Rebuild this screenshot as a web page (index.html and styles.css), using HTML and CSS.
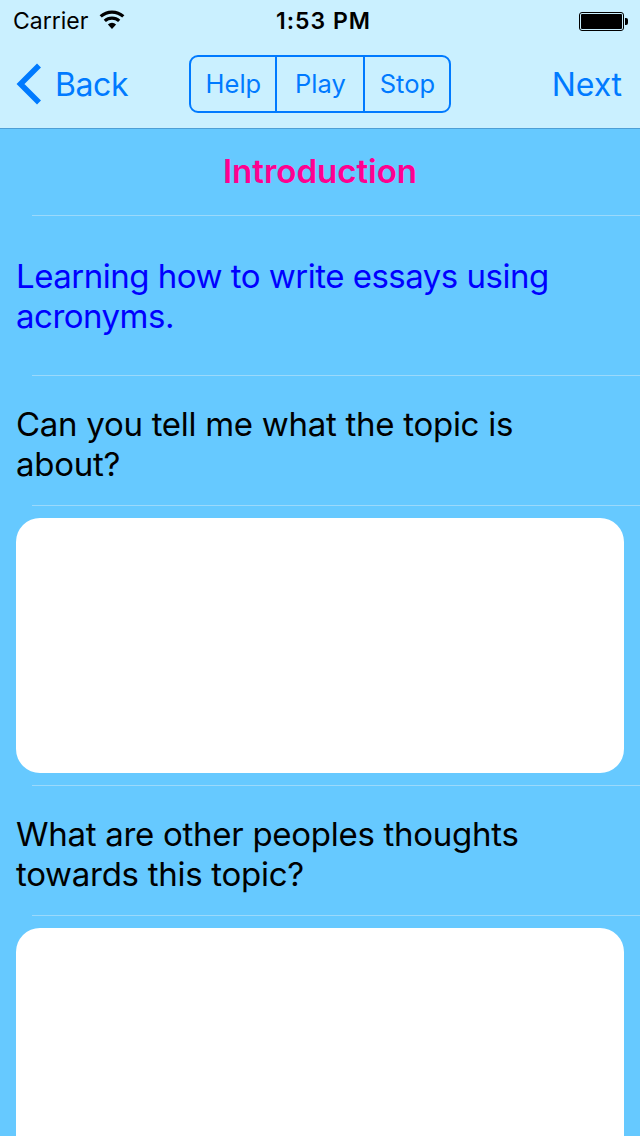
FILE: index.html
```html
<!DOCTYPE html>
<html lang="en">
<head>
<meta charset="utf-8">
<title>Introduction</title>
<link rel="stylesheet" href="styles.css">
</head>
<body>
<div class="screen">
  <header class="bar">
    <div class="status">
      <div class="status-left">
        <span>Carrier</span>
        <svg class="wifi" viewBox="0 0 26 20" width="26" height="20"><path d="M13 19 L8.9 14.4 A6 6 0 0 1 17.1 14.4 Z"/><path d="M6.9 12.1 L4.7 9.7 A12.4 12.4 0 0 1 21.3 9.7 L19.1 12.1 A9.2 9.2 0 0 0 6.9 12.1 Z"/><path d="M2.8 7.6 L0.6 5.2 A18.6 18.6 0 0 1 25.4 5.2 L23.2 7.6 A15.4 15.4 0 0 0 2.8 7.6 Z"/></svg>
      </div>
      <div class="status-time">1:53 PM</div>
      <div class="status-right">
        <div class="battery"><div class="battery-fill"></div></div>
        <div class="battery-tip"></div>
      </div>
    </div>
    <nav class="nav">
      <a class="back">
        <svg class="chevron" viewBox="0 0 26 42" width="26" height="42"><path d="M23 2.5 L4.5 21 L23 39.5" fill="none" stroke="#007aff" stroke-width="5.6"/></svg>
        <span>Back</span>
      </a>
      <div class="segments">
        <span class="seg seg-help">Help</span>
        <span class="seg seg-play">Play</span>
        <span class="seg seg-stop">Stop</span>
      </div>
      <a class="next">Next</a>
    </nav>
  </header>
  <main class="list">
    <section class="row row-title"><h1>Introduction</h1></section>
    <section class="row row-intro"><p>Learning how to write essays using acronyms.</p></section>
    <section class="row row-question"><p>Can you tell me what the topic is about?</p></section>
    <section class="row row-box"><div class="box"></div></section>
    <section class="row row-question"><p>What are other peoples thoughts towards this topic?</p></section>
    <section class="row row-box row-last"><div class="box"></div></section>
  </main>
</div>
</body>
</html>
```
FILE: styles.css
```css
* { box-sizing: border-box; }
html, body { margin: 0; padding: 0; }
body { font-family: Inter, "Liberation Sans", sans-serif; background: #66c9ff; }
.screen { width: 640px; height: 1136px; overflow: hidden; display: flex; flex-direction: column; background: #66c9ff; }
.bar { height: 129px; flex: none; background: #caf0ff; border-bottom: 1px solid #4d9fd6; }
.status { height: 40px; display: flex; align-items: center; justify-content: space-between; padding: 2px 12px 0 13px; font-size: 23px; color: #000; position: relative; }
.status-left { display: flex; align-items: center; gap: 11px; width: 200px; }
.wifi { fill: #000; margin-top: -3px; }
.status-time { font-weight: 600; font-size: 23px; letter-spacing: 1px; margin-left: 6px; }
.status-right { display: flex; align-items: center; justify-content: flex-end; width: 200px; }
.battery { width: 45px; height: 19px; border: 1px solid #000; border-radius: 3px; padding: 1px; }
.battery-fill { height: 100%; background: #000; border-radius: 1px; }
.battery-tip { width: 3px; height: 7px; background: #000; border-radius: 0 2px 2px 0; margin-left: 1px; }
.nav { height: 88px; display: flex; align-items: center; justify-content: space-between; padding: 0 18px 0 16px; color: #007aff; font-size: 32px; letter-spacing: -0.1px; }
.back { display: flex; align-items: center; gap: 13px; width: 172px; letter-spacing: -0.4px; }
.chevron { flex: none; }
.next { display: block; }
.segments { display: flex; height: 58px; width: 262px; flex: none; border: 2px solid #007aff; border-radius: 9px; font-size: 25.5px; letter-spacing: 0; margin-right: 99px; margin-top: -1px; }
.seg { display: flex; align-items: center; justify-content: center; }
.seg-help { width: 86px; border-right: 2px solid #007aff; }
.seg-play { width: 88px; border-right: 2px solid #007aff; }
.seg-stop { flex: 1; }
.list { flex: 1; display: flex; flex-direction: column; }
.row { position: relative; flex: none; }
.row::after { content: ""; position: absolute; left: 32px; right: 0; bottom: 0; height: 1px; background: #9bd9fb; }
.row-last::after { display: none; }
.row-title { height: 87px; padding-bottom: 4px; display: flex; align-items: center; justify-content: center; }
.row-title h1 { margin: 0; font-size: 33px; font-weight: 600; color: #ff0090; }
.row p { margin: 0; font-size: 33px; letter-spacing: -0.5px; line-height: 40px; }
.row-intro { height: 160px; padding: 40px 32px 0 16px; color: #0000ff; }
.row-question { height: 130px; padding: 28px 32px 0 16px; color: #000; }
.row-question p { letter-spacing: -0.28px; }
.row-box { height: 280px; padding: 12px 16px 0; }
.box { height: 255px; background: #fff; border-radius: 24px; }
.row-last { height: 300px; }
.row-last .box { height: 288px; }
```
